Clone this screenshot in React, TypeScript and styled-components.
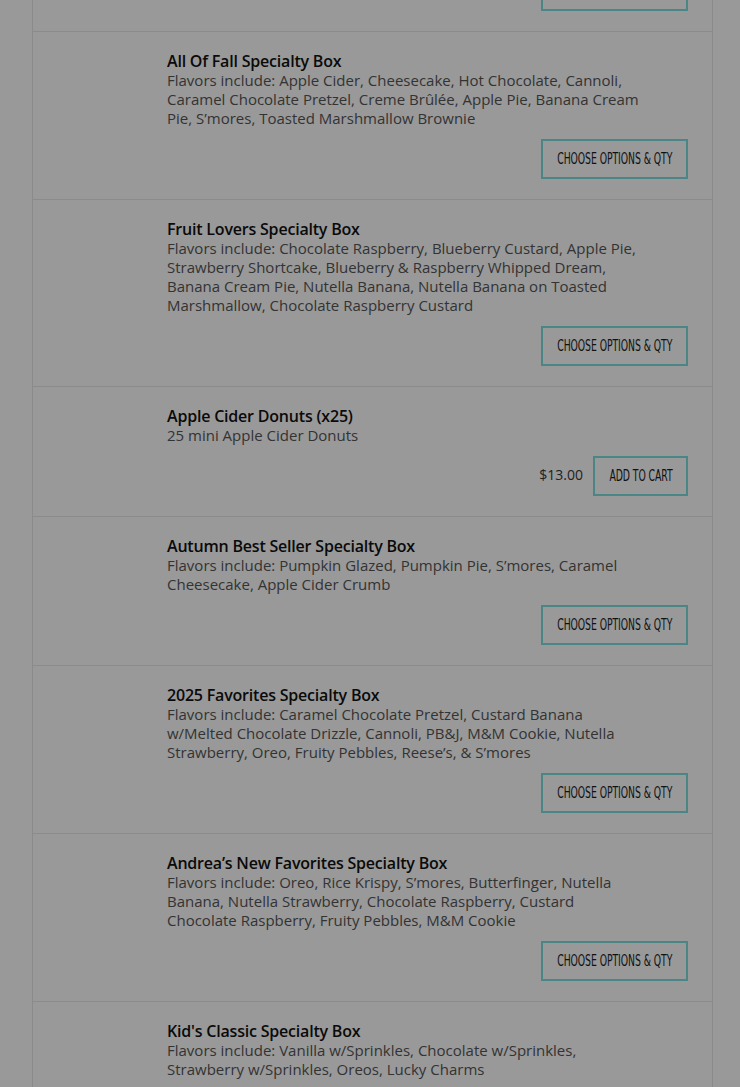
import styled, { createGlobalStyle } from 'styled-components'

const GlobalStyle = createGlobalStyle`
  html, body {
    margin: 0;
    padding: 0;
    background-color: #999999;
    font-family: 'Open Sans', 'Noto Sans', sans-serif;
    overflow: hidden;
  }
  * {
    box-sizing: border-box;
  }
`

const Page = styled.div`
  padding: 0 27px 0 32px;
`

const List = styled.div`
  margin-top: -48px;
  border-left: 1px solid #8b8b8b;
  border-right: 1px solid #8b8b8b;
`

const Row = styled.div`
  display: flex;
  padding: 19px 24px 20px 0;
  border-bottom: 1px solid #8b8b8b;
`

const Thumb = styled.div`
  width: 134px;
  flex-shrink: 0;
`

const Body = styled.div`
  flex: 1;
  display: flex;
  flex-direction: column;
`

const Title = styled.h3`
  margin: 0;
  font-size: 16px;
  line-height: 20px;
  font-weight: 600;
  color: #0a0a0a;
  letter-spacing: -0.2px;
`

const Description = styled.p`
  margin: 0;
  max-width: 476px;
  font-size: 15px;
  line-height: 19px;
  color: #333333;
`

const Actions = styled.div<{ $flush?: boolean }>`
  display: flex;
  justify-content: flex-end;
  align-items: center;
  gap: 10px;
  margin-top: ${(p) => (p.$flush ? '0' : '11px')};
`

const Price = styled.span`
  font-size: 14px;
  color: #222222;
  padding-bottom: 4px;
`

const Button = styled.button<{ $wide?: boolean }>`
  display: flex;
  align-items: center;
  justify-content: center;
  height: 40px;
  width: ${(p) => (p.$wide ? '147px' : '95px')};
  padding: 0;
  border: 2px solid #4a8686;
  background: transparent;
  color: #111111;
  cursor: pointer;
  overflow: hidden;
`

const ButtonLabel = styled.span`
  display: inline-block;
  font-family: 'DejaVu Sans', 'Liberation Sans', sans-serif;
  font-size: 15px;
  line-height: 1;
  white-space: nowrap;
  text-transform: uppercase;
  letter-spacing: -0.1px;
  transform: scaleX(0.62);
`

type Item = {
  name: string
  description: string
  price?: string
}

const items: Item[] = [
  {
    name: 'All Of Fall Specialty Box',
    description:
      'Flavors include: Apple Cider, Cheesecake, Hot Chocolate, Cannoli, Caramel Chocolate Pretzel, Creme Brûlée, Apple Pie, Banana Cream Pie, S’mores, Toasted Marshmallow Brownie',
  },
  {
    name: 'Fruit Lovers Specialty Box',
    description:
      'Flavors include: Chocolate Raspberry, Blueberry Custard, Apple Pie, Strawberry Shortcake, Blueberry & Raspberry Whipped Dream, Banana Cream Pie, Nutella Banana, Nutella Banana on Toasted Marshmallow, Chocolate Raspberry Custard',
  },
  {
    name: 'Apple Cider Donuts (x25)',
    description: '25 mini Apple Cider Donuts',
    price: '$13.00',
  },
  {
    name: 'Autumn Best Seller Specialty Box',
    description:
      'Flavors include: Pumpkin Glazed, Pumpkin Pie, S’mores, Caramel Cheesecake, Apple Cider Crumb',
  },
  {
    name: '2025 Favorites Specialty Box',
    description:
      'Flavors include: Caramel Chocolate Pretzel, Custard Banana w/Melted Chocolate Drizzle, Cannoli, PB&J, M&M Cookie, Nutella Strawberry, Oreo, Fruity Pebbles, Reese’s, & S’mores',
  },
  {
    name: 'Andrea’s New Favorites Specialty Box',
    description:
      'Flavors include: Oreo, Rice Krispy, S’mores, Butterfinger, Nutella Banana, Nutella Strawberry, Chocolate Raspberry, Custard Chocolate Raspberry, Fruity Pebbles, M&M Cookie',
  },
  {
    name: "Kid's Classic Specialty Box",
    description:
      'Flavors include: Vanilla w/Sprinkles, Chocolate w/Sprinkles, Strawberry w/Sprinkles, Oreos, Lucky Charms',
  },
]

const App = () => {
  return (
    <>
      <GlobalStyle />
      <Page>
        <List>
          <Row>
            <Thumb />
            <Body>
              <Actions $flush>
                <Button $wide>
                  <ButtonLabel>Choose Options &amp; Qty</ButtonLabel>
                </Button>
              </Actions>
            </Body>
          </Row>
          {items.map((item) => (
            <Row key={item.name}>
              <Thumb />
              <Body>
                <Title>{item.name}</Title>
                <Description>{item.description}</Description>
                <Actions>
                  {item.price ? (
                    <>
                      <Price>{item.price}</Price>
                      <Button>
                        <ButtonLabel>Add to Cart</ButtonLabel>
                      </Button>
                    </>
                  ) : (
                    <Button $wide>
                      <ButtonLabel>Choose Options &amp; Qty</ButtonLabel>
                    </Button>
                  )}
                </Actions>
              </Body>
            </Row>
          ))}
        </List>
      </Page>
    </>
  )
}

export default App
